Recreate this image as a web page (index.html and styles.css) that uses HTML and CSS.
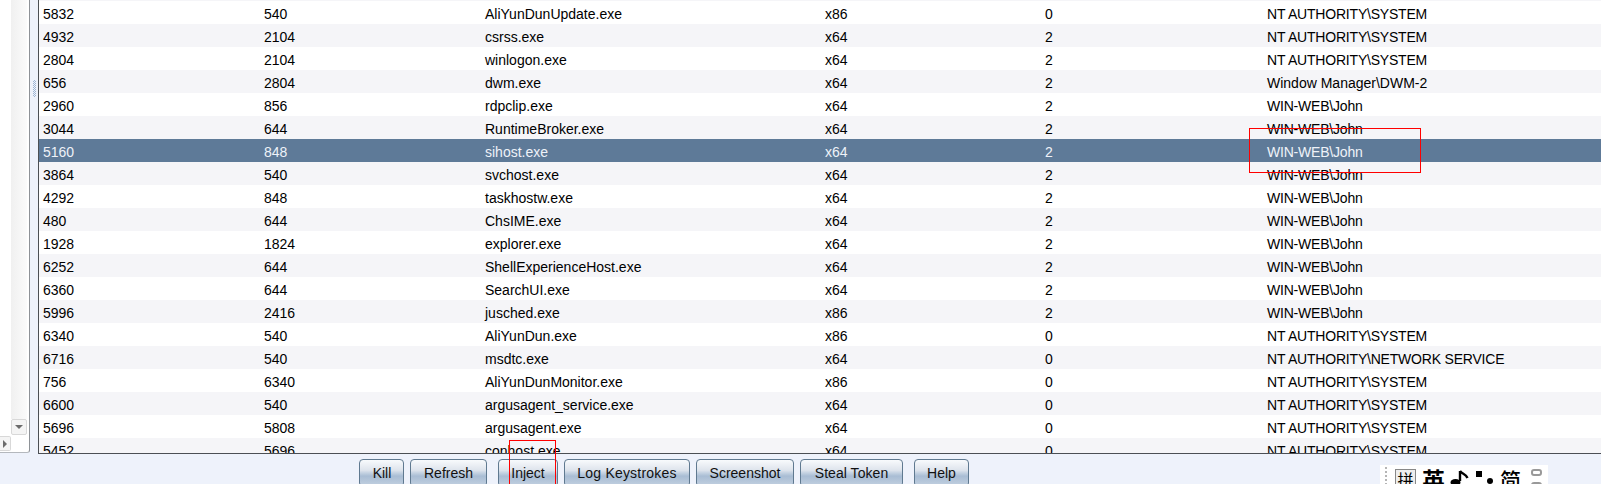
FILE: index.html
```html
<!DOCTYPE html>
<html lang="en">
<head>
<meta charset="utf-8">
<title>Processes</title>
<link rel="stylesheet" href="styles.css">
</head>
<body>
<div class="main">
  <aside class="side">
    <div class="side-inner">
      <div class="side-blank"></div>
      <div class="vscroll">
        <div class="vtrack"></div>
        <div class="sbtn"><span class="arrow-down"></span></div>
      </div>
    </div>
    <div class="hscroll"><div class="hbtn"><span class="arrow-right"></span></div></div>
  </aside>
  <div class="divider"><span class="grip"></span></div>
  <div class="table-pane">
    <table class="procs">
      <colgroup>
        <col class="c-pid"><col class="c-ppid"><col class="c-name"><col class="c-arch"><col class="c-sess"><col class="c-user">
      </colgroup>
      <tbody>
        <tr><td>5832</td><td>540</td><td>AliYunDunUpdate.exe</td><td>x86</td><td>0</td><td>NT AUTHORITY\SYSTEM</td></tr>
        <tr><td>4932</td><td>2104</td><td>csrss.exe</td><td>x64</td><td>2</td><td>NT AUTHORITY\SYSTEM</td></tr>
        <tr><td>2804</td><td>2104</td><td>winlogon.exe</td><td>x64</td><td>2</td><td>NT AUTHORITY\SYSTEM</td></tr>
        <tr><td>656</td><td>2804</td><td>dwm.exe</td><td>x64</td><td>2</td><td class="plain">Window Manager\DWM-2</td></tr>
        <tr><td>2960</td><td>856</td><td>rdpclip.exe</td><td>x64</td><td>2</td><td>WIN-WEB\John</td></tr>
        <tr><td>3044</td><td>644</td><td>RuntimeBroker.exe</td><td>x64</td><td>2</td><td>WIN-WEB\John</td></tr>
        <tr class="selected"><td>5160</td><td>848</td><td>sihost.exe</td><td>x64</td><td>2</td><td>WIN-WEB\John</td></tr>
        <tr><td>3864</td><td>540</td><td>svchost.exe</td><td>x64</td><td>2</td><td>WIN-WEB\John</td></tr>
        <tr><td>4292</td><td>848</td><td>taskhostw.exe</td><td>x64</td><td>2</td><td>WIN-WEB\John</td></tr>
        <tr><td>480</td><td>644</td><td>ChsIME.exe</td><td>x64</td><td>2</td><td>WIN-WEB\John</td></tr>
        <tr><td>1928</td><td>1824</td><td>explorer.exe</td><td>x64</td><td>2</td><td>WIN-WEB\John</td></tr>
        <tr><td>6252</td><td>644</td><td>ShellExperienceHost.exe</td><td>x64</td><td>2</td><td>WIN-WEB\John</td></tr>
        <tr><td>6360</td><td>644</td><td>SearchUI.exe</td><td>x64</td><td>2</td><td>WIN-WEB\John</td></tr>
        <tr><td>5996</td><td>2416</td><td>jusched.exe</td><td>x86</td><td>2</td><td>WIN-WEB\John</td></tr>
        <tr><td>6340</td><td>540</td><td>AliYunDun.exe</td><td>x86</td><td>0</td><td>NT AUTHORITY\SYSTEM</td></tr>
        <tr><td>6716</td><td>540</td><td>msdtc.exe</td><td>x64</td><td>0</td><td>NT AUTHORITY\NETWORK SERVICE</td></tr>
        <tr><td>756</td><td>6340</td><td>AliYunDunMonitor.exe</td><td>x86</td><td>0</td><td>NT AUTHORITY\SYSTEM</td></tr>
        <tr><td>6600</td><td>540</td><td>argusagent_service.exe</td><td>x64</td><td>0</td><td>NT AUTHORITY\SYSTEM</td></tr>
        <tr><td>5696</td><td>5808</td><td>argusagent.exe</td><td>x64</td><td>0</td><td>NT AUTHORITY\SYSTEM</td></tr>
        <tr><td>5452</td><td>5696</td><td>conhost.exe</td><td>x64</td><td>0</td><td>NT AUTHORITY\SYSTEM</td></tr>
      </tbody>
    </table>
  </div>
</div>
<div class="actions">
  <button class="btn b-kill">Kill</button>
  <button class="btn b-refresh">Refresh</button>
  <button class="btn b-inject">Inject</button>
  <button class="btn b-log">Log Keystrokes</button>
  <button class="btn b-shot">Screenshot</button>
  <button class="btn b-steal">Steal Token</button>
  <button class="btn b-help">Help</button>
</div>
<div class="mark mark-user"></div>
<div class="mark mark-inject"></div>
<div class="ime">
  <span class="ime-grip"></span>
  <span class="ime-box">拼</span>
  <span class="ime-ch">英</span>
  <svg class="ime-note" width="19" height="17" viewBox="0 0 19 17" aria-hidden="true"><path d="M10 1v10M10 1c2 3 6 3 7.5 7" fill="none" stroke="#000" stroke-width="2.4"/><ellipse cx="5.5" cy="12.5" rx="5" ry="3.4" fill="#000"/></svg>
  <span class="ime-dots"><i></i><i></i></span>
  <span class="ime-ch ime-jian">简</span>
  <span class="ime-rings"><i></i><i></i></span>
</div>
</body>
</html>
```
FILE: styles.css
```css
* { box-sizing: border-box; }
html, body { margin: 0; height: 100%; }
body {
  width: 1601px;
  height: 484px;
  overflow: hidden;
  position: relative;
  background: #eef2fb;
  font-family: "Liberation Sans", Arial, sans-serif;
  font-size: 14px;
  color: #000;
}
.main { display: flex; height: 454px; }

.side {
  width: 30px;
  height: 453px;
  background: #fff;
  border-right: 1px solid #8e9297;
  border-bottom: 1px solid #b4b8bd;
  border-bottom-right-radius: 3px;
  display: flex;
  flex-direction: column;
}
.side-inner { flex: 1; display: flex; min-height: 0; }
.side-blank { width: 11px; }
.vscroll { width: 16px; display: flex; flex-direction: column; }
.vtrack { flex: 1; background: linear-gradient(90deg, #f0f0f0, #fbfbfb); }
.sbtn {
  height: 16px;
  background: #f4f4f4;
  border: 1px solid #d8d8d8;
  border-radius: 2px;
  display: flex;
  align-items: center;
  justify-content: center;
}
.arrow-down { border: 4px solid transparent; border-top: 4px solid #6b6b6b; border-bottom: 0; }
.hscroll { height: 17px; flex: none; padding-top: 1px; }
.hbtn {
  width: 11px;
  height: 15px;
  background: #f4f4f4;
  border: 1px solid #d8d8d8;
  border-left: 0;
  border-radius: 0 2px 2px 0;
  display: flex;
  align-items: center;
  justify-content: center;
}
.arrow-right { border: 4px solid transparent; border-left: 4px solid #6b6b6b; border-right: 0; }

.divider { width: 8px; display: flex; align-items: flex-start; justify-content: center; padding: 80px 0 0 0; }
.grip {
  width: 3px;
  height: 17px;
  background-image: repeating-conic-gradient(#9fb6d4 0 25%, transparent 0 50%);
  background-size: 2px 2px;
}

.table-pane {
  flex: 1;
  min-width: 0;
  height: 454px;
  overflow: hidden;
  background: #f5f5f8;
  padding-top: 1px;
  border-left: 1px solid #4b4f54;
  border-bottom: 1px solid #4b4f54;
}
.procs { width: 1562px; border-collapse: collapse; table-layout: fixed; }
.c-pid, .c-ppid { width: 221px; }
.c-name { width: 340px; }
.c-arch { width: 220px; }
.c-sess { width: 222px; }
.procs tr { height: 23px; background: #fff; }
.procs tr:nth-child(even) { background: #f5f5f8; }
.procs td { padding: 4px 0 0 4px; line-height: 19px; white-space: nowrap; }
.procs td:last-child { letter-spacing: -0.2px; }
.procs td.plain { letter-spacing: 0; }
.procs tr.selected { background: #5e7a98; color: #eef2f8; }

.actions { height: 30px; padding: 5px 0 0 359px; display: flex; gap: 6px; overflow: hidden; }
.btn {
  height: 28px;
  padding: 0;
  flex: none;
  font: inherit;
  color: #111;
  border: 1px solid #5f7990;
  border-radius: 4px;
  background: linear-gradient(#f8fafc 0, #dde3ec 40%, #c3d1e1 50%, #a9bdd4 62%, #c2d0e0 100%);
}
.b-kill { width: 45px; padding-left: 1px; }
.b-refresh { width: 77px; }
.b-inject { width: 60px; margin-left: 5px; }
.b-log { width: 126px; letter-spacing: 0.2px; }
.b-shot { width: 98px; }
.b-steal { width: 103px; letter-spacing: 0.05px; }
.b-help { width: 55px; margin-left: 5px; }

.mark { position: absolute; border: 1px solid #f00; }
.mark-user { left: 1249px; top: 128px; width: 172px; height: 45px; }
.mark-inject { left: 509px; top: 440px; width: 47px; height: 50px; }

.ime {
  position: absolute;
  left: 1380px;
  top: 465px;
  width: 168px;
  height: 19px;
  background: #fff;
  overflow: hidden;
  display: flex;
  align-items: flex-start;
  font-family: "Noto Sans CJK SC", sans-serif;
  color: #000;
}
.ime-grip {
  flex: none;
  width: 2px;
  height: 19px;
  margin: 2px 0 0 5px;
  background-image: repeating-linear-gradient(#b5b5b5 0 2px, transparent 2px 4px);
}
.ime-box {
  flex: none;
  width: 21px;
  height: 21px;
  margin: 4px 0 0 8px;
  border: 1px solid #888;
  background: #eee;
  font-size: 16px;
  line-height: 19px;
  text-align: center;
}
.ime-ch { flex: none; font-size: 23px; line-height: 28px; font-weight: 700; margin: 0 0 0 6px; }
.ime-note { flex: none; margin: 5px 0 0 5px; }
.ime-dots { flex: none; display: flex; gap: 5px; margin: 6px 0 0 7px; width: 17px; align-items: flex-start; }
.ime-dots i { width: 6px; height: 6px; background: #000; display: block; }
.ime-dots i + i { margin-top: 7px; border-radius: 50%; }
.ime-jian { font-size: 21px; margin-left: 7px; font-weight: 500; }
.ime-rings { flex: none; display: flex; flex-direction: column; gap: 6px; margin: 4px 0 0 10px; }
.ime-rings i { display: block; width: 11px; height: 7px; border: 2px solid #999; border-radius: 3px; }
```
